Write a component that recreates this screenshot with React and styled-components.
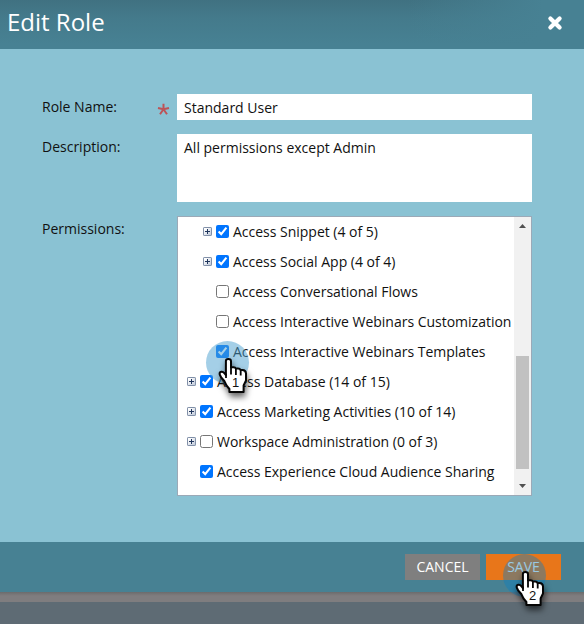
import React from "react";
import styled, { createGlobalStyle } from "styled-components";

const GlobalStyle = createGlobalStyle`
  * { box-sizing: border-box; }
  body { margin: 0; background: #5e6b74; overflow: hidden; }
  input, textarea, button { font: inherit; }
`;

const Page = styled.div`
  width: 584px;
  height: 624px;
  display: flex;
  flex-direction: column;
  background: #5e6b74;
  color: #111;
  font: 14px/20px "Open Sans", "Noto Sans", sans-serif;
`;

const Header = styled.header`
  height: 49px;
  flex: none;
  display: flex;
  align-items: flex-start;
  justify-content: space-between;
  padding: 6px 21px 0 7px;
  background:
    linear-gradient(90deg, transparent 70%, #478193 93%),
    linear-gradient(#407181, #447a8b 35%, #478193 90%);
`;

const Title = styled.h1`
  margin: 0;
  color: #fff;
  font-size: 24px;
  line-height: 32px;
  font-weight: 400;
`;

const CloseButton = styled.button`
  width: 16px;
  height: 16px;
  margin-top: 9px;
  padding: 0;
  border: 0;
  background: none;
  display: flex;
`;

const Body = styled.main`
  height: 493px;
  flex: none;
  padding: 45px 52px 0 42px;
  display: flex;
  flex-direction: column;
  gap: 14px;
  background: #8ac2d3;
`;

const Field = styled.div`
  display: grid;
  grid-template-columns: 115px 20px 355px;
  align-items: start;
`;

const Label = styled.label`
  padding-top: 3px;
`;

const Required = styled.span`
  display: flex;
  padding-top: 9px;
`;

const TextInput = styled.input`
  grid-column: 3;
  width: 355px;
  height: 26px;
  padding: 1px 7px 0;
  border: 0;
  outline: 0;
  color: #111;
  background: #fff;
`;

const TextArea = styled.textarea`
  grid-column: 3;
  display: block;
  width: 355px;
  height: 68px;
  padding: 4px 7px;
  border: 0;
  outline: 0;
  resize: none;
  color: #111;
  background: #fff;
`;

const TreePanel = styled.div`
  grid-column: 3;
  display: flex;
  height: 280px;
  border: 1px solid #9ba9b7;
  background: #fff;
`;

const Tree = styled.ul`
  flex: 1;
  min-width: 0;
  margin: 0;
  padding: 0;
  list-style: none;
`;

const TreeRow = styled.li`
  display: flex;
  align-items: center;
  height: 30px;
  padding: 0 0 1px ${(p) => (p.$depth === 2 ? 25 : 9)}px;
  letter-spacing: -0.01px;
  white-space: nowrap;
`;

const ExpanderSlot = styled.span`
  width: 13px;
  height: 9px;
  flex: none;
  display: flex;
`;

const Check = styled.input`
  width: 13px;
  height: 13px;
  margin: 0 4px 0 0;
  flex: none;
`;

const CheckAnchor = styled.span`
  position: relative;
  display: flex;
`;

const Scrollbar = styled.div`
  width: 17px;
  flex: none;
  display: flex;
  flex-direction: column;
  align-items: center;
  padding: 7px 0;
  background: #f1f1f1;
`;

const Thumb = styled.div`
  width: 13px;
  height: 113px;
  margin: 128px 0 15px;
  background: #c1c1c1;
`;

const Footer = styled.footer`
  height: 50px;
  flex: none;
  display: flex;
  justify-content: flex-end;
  gap: 6px;
  padding: 12px 23px 0 0;
  background: #478193;
`;

const ActionButton = styled.button`
  position: relative;
  width: 75px;
  height: 26px;
  padding: 0;
  border: 0;
  color: #fff;
  background: ${(p) => (p.$primary ? "#e8761a" : "#7f7f7f")};
`;

const Backdrop = styled.div`
  height: 10px;
  flex: none;
  background: linear-gradient(#6b6b6c, #767576 2px, #7f7d7f 4px);
`;

const Pointer = styled.svg`
  position: absolute;
  z-index: 2;
  left: ${(p) => p.$left}px;
  top: ${(p) => p.$top}px;
  overflow: visible;
  pointer-events: none;
`;

const Halo = styled.circle`
  fill: ${(p) => (p.$light ? "#4a9fd0" : "#0d7fc0")};
  fill-opacity: ${(p) => (p.$light ? 0.5 : 0.42)};
`;

const PointerNumber = styled.text`
  font: 13px "Liberation Sans", sans-serif;
  fill: #111;
`;

const Hand = styled.g`
  filter: drop-shadow(1px 4px 3px rgba(0, 0, 0, 0.6));
`;

function ClickPointer({ number, left, top, handX, handY, light }) {
  return (
    <Pointer width="60" height="64" $left={left} $top={top}>
      <Halo cx="21.5" cy="21.5" r="21.5" $light={light} />
      <g transform={`translate(${handX} ${handY})`}>
        <Hand>
          <path
            d="M6.9 3 Q6.9 1 9.3 1 Q12 1 12 3.3 V9.2 H14.5 Q16.4 9.2 16.8 10.6 H19 Q21 10.6 21.5 12 H23.5 Q26.8 12.2 27 15.5 V22.5 L24.6 27.5 V34 H10.4 V31 L7.5 27.5 L5.3 23 L2.2 19.5 L0.7 16.5 Q0.2 14.3 2.3 13.8 Q4 13.5 5.3 15.2 L6.9 17 Z"
            fill="#fff"
            stroke="#050505"
            strokeWidth="2"
            strokeLinejoin="round"
          />
          <path d="M12 9V16.5M16.9 10.5V17M21.7 12V17.5M7 15.5V20" fill="none" stroke="#050505" strokeWidth="1.8" />
        </Hand>
        <PointerNumber x="13" y="28.6">{number}</PointerNumber>
      </g>
    </Pointer>
  );
}

function PlusBox() {
  return (
    <svg width="9" height="9" viewBox="0 0 9 9">
      <defs>
        <linearGradient id="expander" x1="0" y1="0" x2="1" y2="1">
          <stop offset="0.2" stopColor="#fff" />
          <stop offset="1" stopColor="#b8c3d5" />
        </linearGradient>
      </defs>
      <rect x="0.5" y="0.5" width="8" height="8" rx="0.6" fill="url(#expander)" stroke="#8190a8" />
      <path d="M2 4.5H7M4.5 2V7" stroke="#20365d" />
    </svg>
  );
}

const permissions = [
  { name: "Access Snippet (4 of 5)", depth: 2, group: true, checked: true },
  { name: "Access Social App (4 of 4)", depth: 2, group: true, checked: true },
  { name: "Access Conversational Flows", depth: 2 },
  { name: "Access Interactive Webinars Customization", depth: 2 },
  { name: "Access Interactive Webinars Templates", depth: 2, checked: true, step: 1 },
  { name: "Access Database (14 of 15)", depth: 1, group: true, checked: true },
  { name: "Access Marketing Activities (10 of 14)", depth: 1, group: true, checked: true },
  { name: "Workspace Administration (0 of 3)", depth: 1, group: true },
  { name: "Access Experience Cloud Audience Sharing", depth: 1, checked: true },
];

export default function App() {
  return (
    <Page>
      <GlobalStyle />
      <Header>
        <Title>Edit Role</Title>
        <CloseButton aria-label="Close">
          <svg width="16" height="16" viewBox="0 0 16 16">
            <path d="M3.4 3.4L12.6 12.6M12.6 3.4L3.4 12.6" stroke="#fff" strokeWidth="4.2" strokeLinecap="round" />
          </svg>
        </CloseButton>
      </Header>
      <Body>
        <Field>
          <Label htmlFor="role">Role Name:</Label>
          <Required>
            <svg width="13" height="13" viewBox="0 0 13 13">
              <path d="M6.5 6.3V0.8M6.5 6.3L1 5M6.5 6.3L12 5M6.5 6.3L3 11.3M6.5 6.3L10 11.3" stroke="#bd5357" strokeWidth="2" />
            </svg>
          </Required>
          <TextInput id="role" defaultValue="Standard User" />
        </Field>
        <Field>
          <Label htmlFor="description">Description:</Label>
          <TextArea id="description" defaultValue="All permissions except Admin" />
        </Field>
        <Field>
          <Label as="span">Permissions:</Label>
          <TreePanel>
            <Tree>
              {permissions.map((item) => (
                <TreeRow key={item.name} $depth={item.depth}>
                  <ExpanderSlot>{item.group && <PlusBox />}</ExpanderSlot>
                  <CheckAnchor>
                    <Check type="checkbox" defaultChecked={item.checked} aria-label={item.name} />
                    {item.step && <ClickPointer light number={item.step} left={-10} top={-4} handX={13} handY={17} />}
                  </CheckAnchor>
                  <span>{item.name}</span>
                </TreeRow>
              ))}
            </Tree>
            <Scrollbar>
              <svg width="7" height="4" viewBox="0 0 7 4"><path d="M0 4L3.5 0L7 4Z" fill="#505050" /></svg>
              <Thumb />
              <svg width="7" height="4" viewBox="0 0 7 4"><path d="M0 0L3.5 4L7 0Z" fill="#505050" /></svg>
            </Scrollbar>
          </TreePanel>
        </Field>
      </Body>
      <Footer>
        <ActionButton>CANCEL</ActionButton>
        <ActionButton $primary>
          SAVE
          <ClickPointer number={2} left={17} top={0} handX={13} handY={17} />
        </ActionButton>
      </Footer>
      <Backdrop />
    </Page>
  );
}
